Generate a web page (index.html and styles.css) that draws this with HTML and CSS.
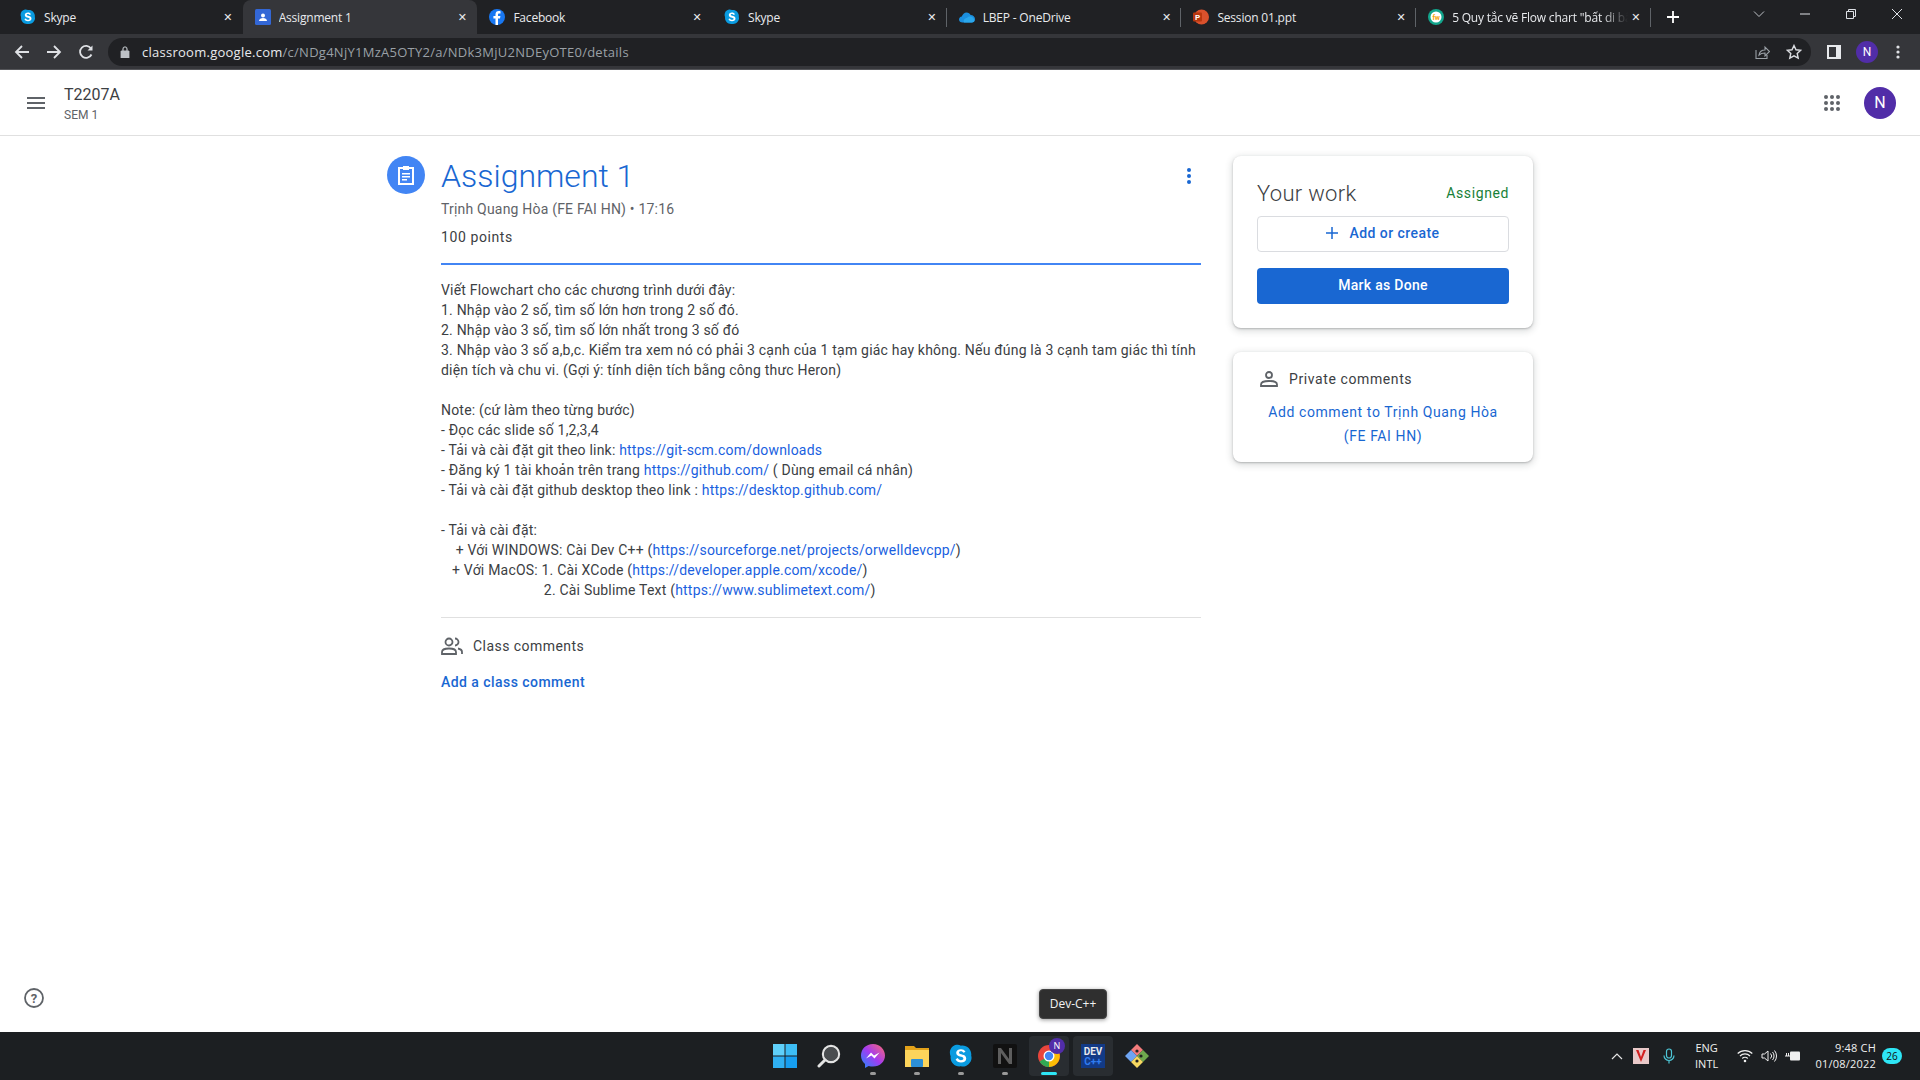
FILE: index.html
```html
<!DOCTYPE html>
<html lang="vi">
<head>
    <meta charset="UTF-8">
    <title>Assignment 1</title>
    <link rel="stylesheet" href="styles.css">
</head>
<body>
    <svg class="defs" width="0" height="0">
        <symbol id="skype" viewBox="0 0 16 16">
            <path d="M5 .5a4.500 4.500 0 0 1 3 .6c4-.6 7.400 2.800 6.800 6.800 1.300 3.600-2.900 8-6.800 7-4 .7-7.500-2.800-6.900-6.800C-.4 5 1.500 1 5 .5z" fill="#0a9be0"/>
            <path d="M11 5.200C10.400 4 9.300 3.500 8 3.500c-2 0-3.200 1-3.200 2.400 0 3.200 4.800 2 4.800 3.800 0 .7-.7 1.100-1.600 1.100-1 0-1.700-.5-2.100-1.400l-1.500.7c.6 1.400 2 2.200 3.600 2.200 2.100 0 3.500-1 3.500-2.700 0-3.300-4.800-2.200-4.800-3.800 0-.6.500-.9 1.300-.9s1.300.4 1.700 1z" fill="#fff"/>
        </symbol>
    </svg>

    <div class="tabstrip">
        <div class="tab">
            <svg class="fav" viewBox="0 0 16 16"><use href="#skype"/></svg>
            <span class="tab-title">Skype</span><span class="tab-x">✕</span>
        </div>
        <div class="tab active">
            <svg class="fav" viewBox="0 0 16 16"><rect width="16" height="16" rx="1.500" fill="#3367d6"/><circle cx="8" cy="6.500" r="2" fill="#fff"/><path d="M4 12c0-2 2-3 4-3s4 1 4 3z" fill="#fff"/></svg>
            <span class="tab-title">Assignment 1</span><span class="tab-x">✕</span>
        </div>
        <div class="tab sep-none">
            <svg class="fav" viewBox="0 0 16 16"><circle cx="8" cy="8" r="8" fill="#1877f2"/><path d="M9 16V9.500h2l.4-2.500H9V5.600c0-.8.3-1.200 1.300-1.200h1.200V2.200C11 2.100 10.300 2 9.700 2 7.800 2 6.500 3.200 6.500 5.300V7H4.400v2.500h2.100V16z" fill="#fff"/></svg>
            <span class="tab-title">Facebook</span><span class="tab-x">✕</span>
        </div>
        <div class="tab">
            <svg class="fav" viewBox="0 0 16 16"><use href="#skype"/></svg>
            <span class="tab-title">Skype</span><span class="tab-x">✕</span>
        </div>
        <div class="tab">
            <svg class="fav" viewBox="0 0 16 16"><path d="M3.500 13.500C1.500 13.500 0 12.200 0 10.500c0-1.600 1.200-2.800 2.800-3C3.500 5.200 5.300 3.500 7.600 3.500c1.800 0 3.300 1 4 2.500 2.500 0 4.400 1.800 4.400 3.900 0 2-1.500 3.600-3.500 3.600z" fill="#1b8fdf"/><path d="M5 13.500c-1-2 .5-4.500 3-4.500 1.500-2 5-2 6.500.5 1.500 1 1.500 4-1.500 4z" fill="#2aa7ec"/></svg>
            <span class="tab-title">LBEP - OneDrive</span><span class="tab-x">✕</span>
        </div>
        <div class="tab">
            <svg class="fav" viewBox="0 0 16 16"><circle cx="8.500" cy="8" r="7.500" fill="#d9512c"/><rect x="0" y="3.500" width="9" height="9" rx="1" fill="#b7370f"/><text x="4.500" y="11" text-anchor="middle" font-family="Roboto" font-weight="700" font-size="8" fill="#fff">P</text></svg>
            <span class="tab-title">Session 01.ppt</span><span class="tab-x">✕</span>
        </div>
        <div class="tab">
            <svg class="fav" viewBox="0 0 16 16"><circle cx="8" cy="8" r="8" fill="#12a58c"/><circle cx="8" cy="8" r="5.500" fill="#fff"/><text x="8" y="10.500" text-anchor="middle" font-family="Roboto" font-weight="700" font-size="7" fill="#f2a20c">fw</text></svg>
            <span class="tab-title tab-fade">5 Quy tắc vẽ Flow chart "bất di bất dịch"</span><span class="tab-x">✕</span>
        </div>
        <div class="tab-plus">
            <svg width="16" height="16" viewBox="0 0 16 16"><path d="M8 2v12M2 8h12" stroke="#fff" stroke-width="1.800"/></svg>
        </div>
        <div class="winctl">
            <svg width="12" height="12" viewBox="0 0 12 12"><path d="M1 3.500l5 5 5-5" fill="none" stroke="#bdc1c6"/></svg>
            <svg width="12" height="12" viewBox="0 0 12 12"><path d="M1 6h10" stroke="#dee1e6"/></svg>
            <svg width="12" height="12" viewBox="0 0 12 12"><path d="M1.500 3.500h7v7h-7zM3.500 3.500v-2h7v7h-2" fill="none" stroke="#dee1e6"/></svg>
            <svg width="12" height="12" viewBox="0 0 12 12"><path d="M1 1l10 10M11 1L1 11" stroke="#dee1e6"/></svg>
        </div>
    </div>

    <div class="toolbar">
        <div class="nav-btns">
            <svg width="16" height="16" viewBox="0 0 16 16"><path d="M15 8H2M8 2L2 8l6 6" fill="none" stroke="#dfe1e5" stroke-width="1.800"/></svg>
            <svg width="16" height="16" viewBox="0 0 16 16"><path d="M1 8h13M8 2l6 6-6 6" fill="none" stroke="#dfe1e5" stroke-width="1.800"/></svg>
            <svg width="16" height="16" viewBox="0 0 16 16"><path d="M13.500 10.500A6 6 0 1 1 13 4.500" fill="none" stroke="#dfe1e5" stroke-width="1.800"/><path d="M14.500 1.500v5h-5z" fill="#dfe1e5"/></svg>
        </div>
        <div class="omnibox">
            <svg class="lock" width="10" height="12" viewBox="0 0 10 12"><path d="M1 5h8v7H1zM2.800 5V3a2.200 2.200 0 0 1 4.400 0v2" fill="#bdc1c6" stroke="#bdc1c6" stroke-width=".8" fill-rule="nonzero"/><path d="M3.600 4.600V3a1.400 1.400 0 0 1 2.800 0v1.600z" fill="#202124"/></svg>
            <span class="url"><b>classroom.google.com</b>/c/NDg4NjY1MzA5OTY2/a/NDk3MjU2NDEyOTE0/details</span>
            <svg class="omni-icon" width="16" height="16" viewBox="0 0 16 16"><path d="M2 6v8.500h11V11M5 11c.5-3 3-5 6-5V3l4.500 4.500L11 12V9c-2.500 0-4.500.5-6 2z" fill="none" stroke="#9aa0a6" stroke-width="1.100"/></svg>
            <svg class="omni-icon" width="16" height="16" viewBox="0 0 16 16"><path d="M8 1.500l2 4.300 4.700.5-3.500 3.200 1 4.600L8 11.800l-4.200 2.300 1-4.600L1.300 6.300 6 5.800z" fill="none" stroke="#dadce0" stroke-width="1.400"/></svg>
        </div>
        <div class="toolbar-right">
            <svg width="14" height="14" viewBox="0 0 14 14"><rect width="14" height="14" fill="#e8eaed"/><rect x="2" y="2" width="7" height="10" fill="#35363a"/></svg>
            <span class="chrome-avatar">N</span>
            <svg width="4" height="14" viewBox="0 0 4 14"><circle cx="2" cy="2" r="1.600" fill="#dfe1e5"/><circle cx="2" cy="7" r="1.600" fill="#dfe1e5"/><circle cx="2" cy="12" r="1.600" fill="#dfe1e5"/></svg>
        </div>
    </div>

    <header class="app-header">
        <svg class="menu" width="18" height="12" viewBox="0 0 18 12"><path d="M0 0h18v2H0zM0 5h18v2H0zM0 10h18v2H0z" fill="#5f6368"/></svg>
        <div class="class-name">
            <div class="class-title">T2207A</div>
            <div class="class-sub">SEM 1</div>
        </div>
        <svg class="apps" width="16" height="16" viewBox="0 0 16 16" fill="#5f6368"><circle cx="2" cy="2" r="2"/><circle cx="8" cy="2" r="2"/><circle cx="14" cy="2" r="2"/><circle cx="2" cy="8" r="2"/><circle cx="8" cy="8" r="2"/><circle cx="14" cy="8" r="2"/><circle cx="2" cy="14" r="2"/><circle cx="8" cy="14" r="2"/><circle cx="14" cy="14" r="2"/></svg>
        <span class="user-avatar">N</span>
    </header>

    <main class="page">
        <div class="assign-icon">
            <svg width="20" height="20" viewBox="0 0 20 20"><path d="M3 3h14v16H3z" fill="none" stroke="#fff" stroke-width="2"/><path d="M7 1h6v4H7z" fill="#fff"/><path d="M6 8h8v1.500H6zM6 11h8v1.500H6zM6 14h5v1.500H6z" fill="#fff"/></svg>
        </div>
        <section class="detail">
            <div class="detail-head">
                <div>
                    <h1>Assignment 1</h1>
                    <div class="byline">Trịnh Quang Hòa (FE FAI HN) • 17:16</div>
                    <div class="points">100 points</div>
                </div>
                <svg class="more" width="4" height="16" viewBox="0 0 4 16" fill="#1967d2"><circle cx="2" cy="2" r="2"/><circle cx="2" cy="8" r="2"/><circle cx="2" cy="14" r="2"/></svg>
            </div>
            <div class="desc">Viết Flowchart cho các chương trình dưới đây:
1. Nhập vào 2 số, tìm số lớn hơn trong 2 số đó.
2. Nhập vào 3 số, tìm số lớn nhất trong 3 số đó
3. Nhập vào 3 số a,b,c. Kiểm tra xem nó có phải 3 cạnh của 1 tạm giác hay không. Nếu đúng là 3 cạnh tam giác thì tính diện tích và chu vi. (Gợi ý: tính diện tích bằng công thưc Heron)

Note: (cứ làm theo từng bước)
- Đọc các slide số 1,2,3,4
- Tải và cài đặt git theo link: <a href="#">https://git-scm.com/downloads</a>
- Đăng ký 1 tài khoản trên trang <a href="#">https://github.com/</a> ( Dùng email cá nhân)
- Tải và cài đặt github desktop theo link : <a href="#">https://desktop.github.com/</a>

- Tải và cài đặt:
    + Với WINDOWS: Cài Dev C++ (<a href="#">https://sourceforge.net/projects/orwelldevcpp/</a>)
   + Với MacOS: 1. Cài XCode (<a href="#">https://developer.apple.com/xcode/</a>)
                            2. Cài Sublime Text (<a href="#">https://www.sublimetext.com/</a>)</div>
            <div class="comments-head">
                <svg width="22" height="18" viewBox="0 0 22 18" fill="none" stroke="#5f6368" stroke-width="1.800"><circle cx="8" cy="5" r="3.500"/><path d="M1 17v-2c0-2.500 3.500-3.500 7-3.500s7 1 7 3.500v2zM14 1.500a3.500 3.500 0 0 1 0 7M17 11.500c2.500.5 4 1.500 4 3.500v2"/></svg>
                <span>Class comments</span>
            </div>
            <a class="add-comment" href="#">Add a class comment</a>
        </section>
        <aside class="side">
            <div class="card work-card">
                <div class="work-head">
                    <span class="work-title">Your work</span>
                    <span class="work-status">Assigned</span>
                </div>
                <div class="btn btn-add">
                    <svg width="12" height="12" viewBox="0 0 12 12"><path d="M6 0v12M0 6h12" stroke="#1967d2" stroke-width="1.500"/></svg>
                    Add or create
                </div>
                <div class="btn btn-done">Mark as Done</div>
            </div>
            <div class="card private-card">
                <div class="private-head">
                    <svg width="18" height="16" viewBox="0 0 18 16" fill="none" stroke="#5f6368" stroke-width="1.800"><circle cx="9" cy="4" r="3"/><path d="M1 15v-1.500C1 11 5 10 9 10s8 1 8 3.500V15z"/></svg>
                    <span>Private comments</span>
                </div>
                <a class="private-link" href="#">Add comment to Trịnh Quang Hòa (FE FAI HN)</a>
            </div>
        </aside>
    </main>

    <div class="help">
        <svg width="20" height="20" viewBox="0 0 20 20"><circle cx="10" cy="10" r="9" fill="none" stroke="#5f6368" stroke-width="1.800"/><text x="10" y="14.500" text-anchor="middle" font-family="Roboto" font-weight="700" font-size="13" fill="#5f6368">?</text></svg>
    </div>

    <div class="tooltip">Dev-C++</div>

    <footer class="taskbar">
        <div></div>
        <div class="task-icons">
            <div class="task-item">
                <svg width="24" height="24" viewBox="0 0 24 24"><path d="M0 0h11.500v11.500H0z" fill="#5fd0fa"/><path d="M12.500 0H24v11.500H12.500z" fill="#3dbdf5"/><path d="M0 12.500h11.500V24H0z" fill="#2fb0f2"/><path d="M12.500 12.500H24V24H12.500z" fill="#169ef0"/></svg>
            </div>
            <div class="task-item">
                <svg width="24" height="24" viewBox="0 0 24 24" fill="none"><circle cx="14" cy="10" r="8" stroke="#e3e3e3" stroke-width="2.400"/><circle cx="14" cy="10" r="7" fill="#4a4d50"/><path d="M8 16l-6 6" stroke="#e3e3e3" stroke-width="3" stroke-linecap="round"/></svg>
            </div>
            <div class="task-item open">
                <svg width="24" height="24" viewBox="0 0 24 24"><defs><linearGradient id="mess" x1="0" y1="1" x2="1" y2="0"><stop offset="0" stop-color="#1f8bff"/><stop offset=".5" stop-color="#a33bf0"/><stop offset="1" stop-color="#ff6a70"/></linearGradient></defs><path d="M12 0C5 0 0 5 0 11.500c0 3.500 1.500 6.500 4 8.500v4l3.700-2c1.400.4 2.800.6 4.300.6 7 0 12-5 12-11.100S19 0 12 0z" fill="url(#mess)"/><path d="M5 14.500l5-6 3 3 5.500-3-5 6-3-3z" fill="#fff"/></svg>
            </div>
            <div class="task-item open">
                <svg width="24" height="24" viewBox="0 0 24 24"><path d="M0 2h9l2 2h13v18H0z" fill="#e3a21a"/><path d="M0 6h24v17H0z" fill="#fcd45b"/><rect x="6" y="15" width="12" height="8" rx="1" fill="#2c8fd6"/></svg>
            </div>
            <div class="task-item open">
                <svg width="24" height="24" viewBox="0 0 16 16"><use href="#skype"/></svg>
            </div>
            <div class="task-item open">
                <svg width="24" height="24" viewBox="0 0 24 24"><rect width="24" height="24" rx="2" fill="#111"/><path d="M5 20V4h3l8 11V4h3v16h-3L8 9v11z" fill="#5e5e5e"/></svg>
            </div>
            <div class="task-item hovered running">
                <svg width="24" height="24" viewBox="0 0 24 24"><circle cx="12" cy="12" r="11" fill="#e8453c"/><path d="M12 12L2.500 17.500A11 11 0 0 0 12 23c1.400 0 2.800-.3 4-.8z" fill="#31a853"/><path d="M12 7h9.600A11 11 0 0 1 12 23z" fill="#fbbc05"/><circle cx="12" cy="12" r="5.500" fill="#fff"/><circle cx="12" cy="12" r="4.200" fill="#4285f4"/></svg>
                <span class="task-badge">N</span>
            </div>
            <div class="task-item hovered">
                <svg width="24" height="24" viewBox="0 0 24 24"><rect width="24" height="24" fill="#123a86"/><text x="12" y="10.500" text-anchor="middle" font-family="Roboto" font-weight="700" font-size="10" fill="#e8eaed">DEV</text><text x="12" y="21" text-anchor="middle" font-family="Roboto" font-weight="700" font-size="10" fill="#2f7cf0">C++</text></svg>
            </div>
            <div class="task-item">
                <svg width="24" height="24" viewBox="0 0 24 24"><path d="M12 0l6 6-6 6-6-6z" fill="#f47c7c"/><path d="M18 6l6 6-6 6-6-6z" fill="#6ea84e"/><path d="M6 6l6 6-6 6-6-6z" fill="#6ea4f2"/><path d="M12 12l6 6-6 6-6-6z" fill="#f6d860"/><circle cx="12" cy="7" r="1.600" fill="#222"/><circle cx="16" cy="12" r="1.600" fill="#222"/><circle cx="12" cy="17" r="1.600" fill="#222"/></svg>
            </div>
        </div>
        <div class="tray">
            <svg class="tray-up" width="12" height="8" viewBox="0 0 12 8"><path d="M1 7l5-5 5 5" fill="none" stroke="#e6e6e6" stroke-width="1.200"/></svg>
            <svg class="tray-v" width="16" height="16" viewBox="0 0 16 16"><rect width="16" height="16" fill="#e9c9c9"/><path d="M3 2l5 12 5-12h-2.500L8 9 5.500 2z" fill="#d32020"/></svg>
            <svg class="tray-mic" width="12" height="16" viewBox="0 0 12 16" fill="none" stroke="#4dc6d6" stroke-width="1.200"><rect x="3.500" y="1" width="5" height="9" rx="2.500"/><path d="M1 7.500a5 5 0 0 0 10 0M6 12.500V15.500"/></svg>
            <div class="lang">ENG<br>INTL</div>
            <svg class="tray-wifi" width="16" height="14" viewBox="0 0 16 14" fill="none" stroke="#f0f0f0" stroke-width="1.200"><path d="M.7 4.500a10.500 10.500 0 0 1 14.600 0M3 7a7 7 0 0 1 10 0M5.300 9.500a3.500 3.500 0 0 1 5.400 0"/><circle cx="8" cy="12" r=".7" fill="#f0f0f0"/></svg>
            <svg class="tray-vol" width="16" height="14" viewBox="0 0 16 14" fill="none" stroke="#f0f0f0" stroke-width="1"><path d="M1 5h2.500L7 2v10L3.500 9H1zM9.500 4.500a3.500 3.500 0 0 1 0 5M11.500 3a6 6 0 0 1 0 8M13.500 1.500a8.500 8.500 0 0 1 0 11"/></svg>
            <svg class="tray-batt" width="16" height="12" viewBox="0 0 16 12"><rect x="5" y="1.500" width="10" height="9" rx="1" fill="#f0f0f0"/><path d="M0 6h5M1.500 3v3M3.500 3v3" stroke="#f0f0f0"/></svg>
            <div class="clock"><div>9:48 CH</div><div>01/08/2022</div></div>
            <span class="notif">26</span>
        </div>
    </footer>
</body>
</html>
```

FILE: styles.css
```css
* {
    box-sizing: border-box;
}

html, body {
    height: 100%;
}

body {
    margin: 0;
    display: flex;
    flex-direction: column;
    height: 100vh;
    overflow: hidden;
    background-color: #fff;
    color: #3c4043;
    font-family: Roboto, sans-serif;
    font-size: 14px;
    position: relative;
}

a {
    color: #1967d2;
    text-decoration: none;
}

.defs {
    position: absolute;
}

/* chrome */
.tabstrip {
    display: flex;
    height: 34px;
    padding-left: 8px;
    background-color: #202124;
    font-family: "Open Sans", sans-serif;
    font-size: 12px;
    letter-spacing: -0.2px;
    color: #e8eaed;
}

.tab {
    width: 234.7px;
    display: flex;
    align-items: center;
    padding: 0 7px 0 12px;
    position: relative;
}

.tab::after {
    content: "";
    position: absolute;
    right: 0;
    top: 8px;
    height: 19px;
    width: 1px;
    background-color: #5f6368;
}

.tab:first-child::after,
.tab.active::after,
.tab.sep-none::after {
    display: none;
}

.tab.active {
    background-color: #35363a;
    border-radius: 8px 8px 0 0;
}

.fav {
    width: 16px;
    height: 16px;
    flex: none;
    margin-right: 8px;
}

.tab-title {
    flex: 1;
    white-space: nowrap;
    overflow: hidden;
}

.tab-fade {
    -webkit-mask-image: linear-gradient(to right, #000 85%, transparent);
    mask-image: linear-gradient(to right, #000 85%, transparent);
}

.tab-x {
    width: 16px;
    text-align: center;
    font-size: 11px;
    font-weight: 700;
    font-family: "DejaVu Sans", sans-serif;
    color: #e8eaed;
}

.tab-plus {
    width: 44px;
    display: flex;
    align-items: center;
    justify-content: center;
}

.winctl {
    margin-left: auto;
    display: flex;
    gap: 34px;
    padding: 8px 17px 0 0;
}

.toolbar {
    height: 36px;
    display: flex;
    align-items: center;
    background-color: #35363a;
    border-bottom: 1px solid #55565a;
}

.nav-btns {
    width: 108px;
    display: flex;
    gap: 16px;
    padding-left: 14px;
}

.omnibox {
    width: 1703px;
    height: 28px;
    display: flex;
    align-items: center;
    background-color: #202124;
    border-radius: 14px;
    padding: 0 9px 0 12px;
}

.lock {
    margin-right: 12px;
}

.url {
    flex: 1;
    font-family: "Open Sans", sans-serif;
    font-size: 13px;
    letter-spacing: 0.26px;
    color: #9aa0a6;
}

.url b {
    font-weight: 400;
    color: #e8eaed;
}

.omni-icon {
    margin-left: 16px;
}

.toolbar-right {
    display: flex;
    align-items: center;
    gap: 15px;
    padding-left: 16px;
}

.toolbar-right svg:last-child {
    margin-left: 3px;
}

.chrome-avatar {
    width: 22px;
    height: 22px;
    border-radius: 50%;
    background-color: #512da8;
    color: #fff;
    font-size: 12px;
    line-height: 22px;
    text-align: center;
}

/* classroom header */
.app-header {
    height: 66px;
    flex: none;
    display: flex;
    align-items: center;
    padding: 0 24px 0 27px;
    border-bottom: 1px solid #e0e0e0;
}

.menu {
    margin-right: 19px;
}

.class-name {
    flex: 1;
    padding-top: 5px;
}

.class-title {
    font-size: 16px;
    line-height: 20px;
    color: #3c4043;
}

.class-sub {
    font-size: 12px;
    line-height: 20px;
    color: #5f6368;
}

.apps {
    margin-right: 24px;
}

.user-avatar {
    width: 32px;
    height: 32px;
    margin-top: 1px;
    border-radius: 50%;
    background-color: #512da8;
    color: #fff;
    font-size: 16px;
    line-height: 32px;
    text-align: center;
}

/* main */
.page {
    flex: 1;
    display: flex;
    justify-content: center;
    align-items: flex-start;
    padding-top: 20px;
}

.assign-icon {
    width: 38px;
    height: 38px;
    flex: none;
    border-radius: 50%;
    background-color: #4285f4;
    display: flex;
    align-items: center;
    justify-content: center;
    margin-right: 16px;
}

.detail {
    width: 760px;
    margin-right: 32px;
}

.detail-head {
    display: flex;
    justify-content: space-between;
    align-items: flex-start;
    border-bottom: 2px solid #4285f4;
    height: 109px;
}

.more {
    margin: 12px 10px 0 0;
}

h1 {
    margin: 0;
    font-size: 32px;
    line-height: 40px;
    font-weight: 300;
    color: #1967d2;
}

.byline {
    margin-top: 3px;
    line-height: 20px;
    letter-spacing: 0.2px;
    color: #5f6368;
}

.points {
    margin-top: 8px;
    line-height: 20px;
    letter-spacing: 0.6px;
    color: #3c4043;
}

.desc {
    margin-top: 15px;
    padding-bottom: 17px;
    line-height: 20px;
    letter-spacing: 0.2px;
    white-space: pre-wrap;
    color: #3c4043;
    border-bottom: 1px solid #e0e0e0;
}

.desc a {
    color: #1a5fe0;
}

.comments-head {
    display: flex;
    align-items: center;
    gap: 10px;
    margin-top: 18px;
    letter-spacing: 0.45px;
    line-height: 20px;
    color: #3c4043;
}

.add-comment {
    display: block;
    margin-top: 16px;
    font-weight: 500;
    letter-spacing: 0.45px;
    line-height: 20px;
}

.side {
    width: 300px;
    display: flex;
    flex-direction: column;
    gap: 24px;
    flex: none;
}

.card {
    background-color: #fff;
    border-radius: 8px;
    box-shadow: 0 1px 2px rgba(60, 64, 67, 0.3), 0 2px 6px 2px rgba(60, 64, 67, 0.15);
}

.work-card {
    height: 172px;
    padding: 20px 24px 0;
}

.work-head {
    display: flex;
    justify-content: space-between;
    align-items: center;
    height: 34px;
    margin-bottom: 6px;
}

.work-title {
    font-size: 22px;
    font-weight: 300;
    letter-spacing: 0.3px;
    color: #3c4043;
}

.work-status {
    color: #188038;
    letter-spacing: 0.6px;
}

.btn {
    height: 36px;
    display: flex;
    align-items: center;
    justify-content: center;
    gap: 11px;
    padding-bottom: 2px;
    border-radius: 4px;
    font-weight: 500;
    letter-spacing: 0.45px;
}

.btn-add {
    border: 1px solid #dadce0;
    color: #1967d2;
    margin-bottom: 16px;
}

.btn-done {
    background-color: #1967d2;
    color: #fff;
    letter-spacing: 0.3px;
}

.private-card {
    height: 110px;
    padding: 17px 24px 0;
}

.private-head {
    display: flex;
    align-items: center;
    gap: 11px;
    height: 20px;
    padding-left: 3px;
    letter-spacing: 0.6px;
    color: #3c4043;
}

.private-link {
    display: block;
    margin-top: 11px;
    padding: 0 8px;
    text-align: center;
    line-height: 24px;
    letter-spacing: 0.6px;
}

.help {
    position: absolute;
    left: 24px;
    top: 988px;
    width: 20px;
    height: 20px;
}

.tooltip {
    position: absolute;
    left: 1039px;
    top: 989px;
    width: 68px;
    height: 30px;
    background-color: #2f2f2f;
    border-radius: 4px;
    border: 1px solid #444;
    color: #f2f2f2;
    font-family: "Open Sans", sans-serif;
    font-size: 12px;
    line-height: 28px;
    text-align: center;
    box-shadow: 0 1px 4px rgba(0, 0, 0, 0.4);
}

/* taskbar */
.taskbar {
    height: 48px;
    flex: none;
    display: grid;
    grid-template-columns: 1fr auto 1fr;
    align-items: center;
    background-color: #1c1f22;
    color: #f0f0f0;
    font-family: "Open Sans", sans-serif;
    font-size: 12px;
}

.task-icons {
    display: flex;
    gap: 4px;
    margin-left: 2px;
}

.task-item {
    width: 40px;
    height: 40px;
    display: flex;
    align-items: center;
    justify-content: center;
    border-radius: 4px;
    position: relative;
}

.task-item.hovered {
    background-color: #292d31;
}

.task-item.open::after,
.task-item.running::after {
    content: "";
    position: absolute;
    bottom: 1px;
    left: 17px;
    width: 6px;
    height: 3px;
    border-radius: 2px;
    background-color: #9a9a9a;
}

.task-item.running::after {
    left: 12px;
    width: 16px;
    background-color: #2ee6f6;
}

.task-badge {
    position: absolute;
    top: 2px;
    right: 4px;
    width: 16px;
    height: 16px;
    border-radius: 50%;
    background-color: #512da8;
    color: #fff;
    font-size: 9px;
    line-height: 16px;
    text-align: center;
}

.tray {
    display: flex;
    align-items: center;
    justify-content: flex-end;
    padding-right: 18px;
}

.tray > svg {
    flex: none;
}

.tray-up {
    margin-right: 10px;
}

.tray-mic {
    margin-left: 14px;
}

.lang {
    width: 52px;
    margin-left: 6px;
    line-height: 16px;
    font-size: 11px;
    text-align: center;
}

.tray-wifi {
    margin-left: 4px;
}

.tray-vol,
.tray-batt {
    margin-left: 8px;
}

.clock {
    margin: 0 6px 0 15px;
    line-height: 16px;
    text-align: right;
    font-size: 11px;
    letter-spacing: 0.2px;
}

.notif {
    width: 20px;
    height: 16px;
    border-radius: 8px;
    background-color: #2ee6f6;
    color: #111;
    font-size: 10px;
    line-height: 16px;
    text-align: center;
}
```
